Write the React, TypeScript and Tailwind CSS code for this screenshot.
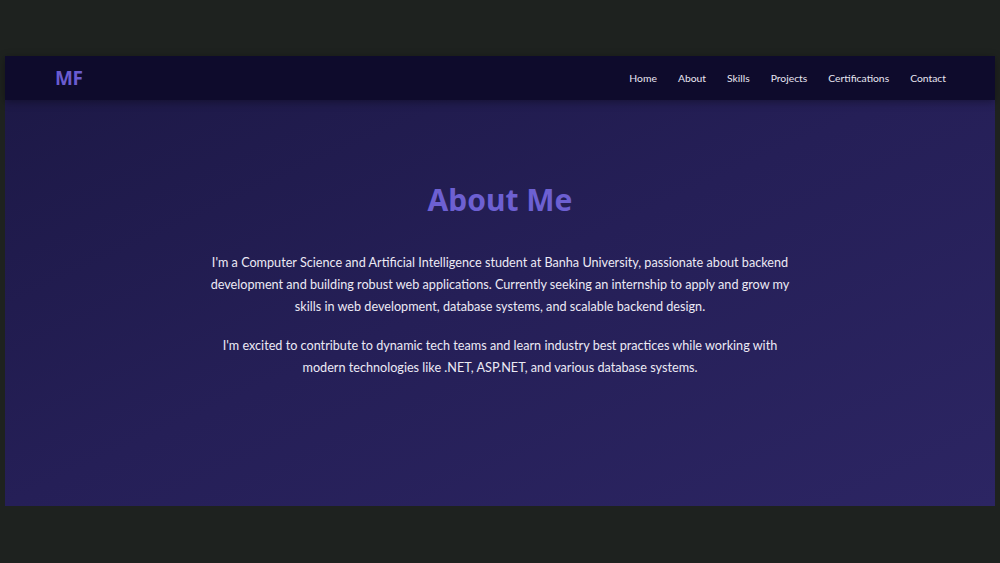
export default function App() {
  const links = ['Home', 'About', 'Skills', 'Projects', 'Certifications', 'Contact']

  return (
    <div
      className="min-h-[563px] w-full bg-[#1e221f] pt-[56px] px-[5px]"
      style={{ fontFamily: 'Lato, "Noto Sans", sans-serif' }}
    >
      <div className="flex h-[450px] flex-col bg-gradient-to-br from-[#1c1845] via-[#251f57] to-[#2c2563]">
        {/* Navbar */}
        <header className="relative z-10 flex h-[44px] items-center justify-between bg-[#0e0b2c] pl-[50px] pr-[49px] shadow-[0_2px_8px_rgba(0,0,0,0.35)]">
          <span className="text-[19px] font-bold tracking-tight text-[#6a5ccf]" style={{ fontFamily: '"Noto Sans", sans-serif' }}>
            MF
          </span>
          <nav className="flex items-center gap-[21px] pt-[2px]">
            {links.map((l) => (
              <a key={l} className="text-[10.35px] text-[#e8e6f2]">
                {l}
              </a>
            ))}
          </nav>
        </header>

        {/* About */}
        <section className="flex flex-col items-center pt-[85px] text-center">
          <h2 className="text-[30px] font-bold leading-none text-[#6d60d2]" style={{ fontFamily: '"Noto Sans", sans-serif' }}>
            About Me
          </h2>
          <div className="mt-[37px] max-w-[640px] text-[12.65px] leading-[22px] text-[#eceaf5]">
            <p>
              I'm a Computer Science and Artificial Intelligence student at Banha University, passionate about backend
              <br />
              development and building robust web applications. Currently seeking an internship to apply and grow my
              <br />
              skills in web development, database systems, and scalable backend design.
            </p>
            <p className="mt-[17px]">
              I'm excited to contribute to dynamic tech teams and learn industry best practices while working with
              <br />
              modern technologies like .NET, ASP.NET, and various database systems.
            </p>
          </div>
        </section>
      </div>
    </div>
  )
}
